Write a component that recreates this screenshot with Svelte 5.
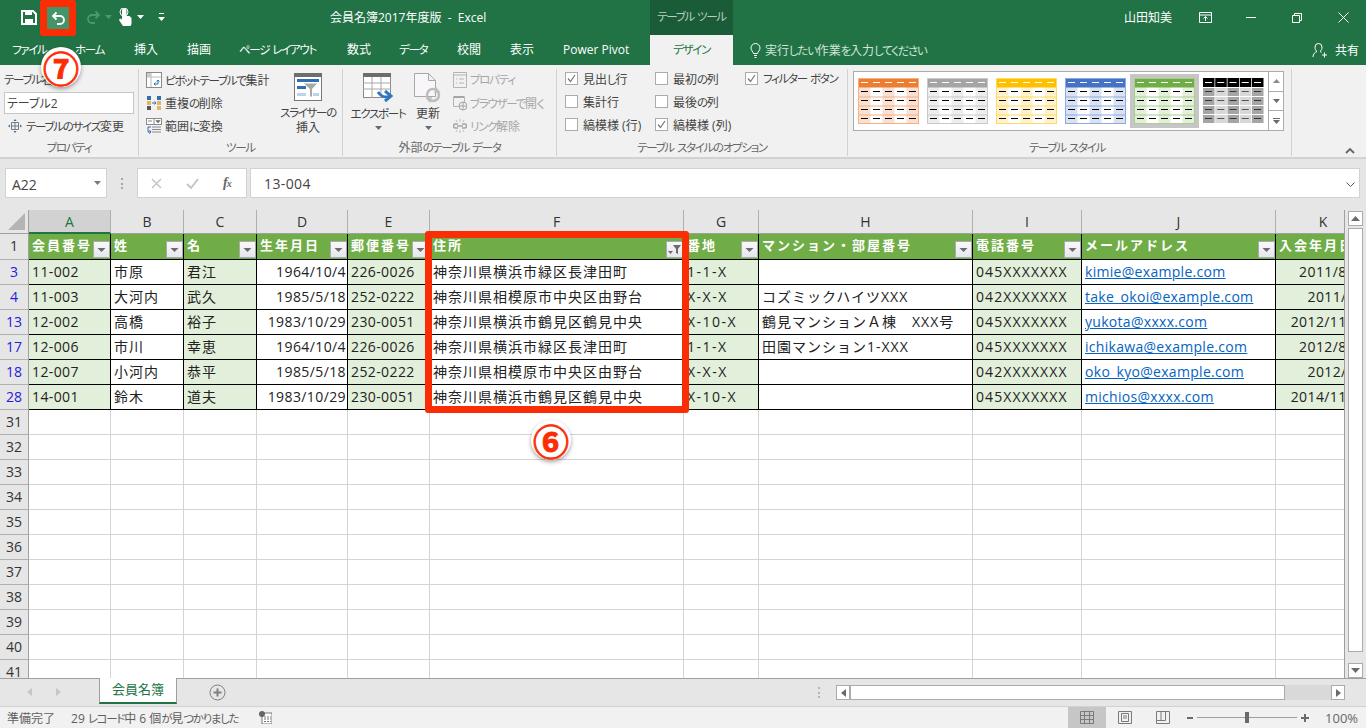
<script>
  const columns = [
    { name: 'A', width: 82, title: '会員番号' },
    { name: 'B', width: 73, title: '姓' },
    { name: 'C', width: 73, title: '名' },
    { name: 'D', width: 91, title: '生年月日' },
    { name: 'E', width: 82, title: '郵便番号' },
    { name: 'F', width: 254, title: '住所', filtered: true },
    { name: 'G', width: 75, title: '番地' },
    { name: 'H', width: 214, title: 'マンション・部屋番号' },
    { name: 'I', width: 109, title: '電話番号' },
    { name: 'J', width: 194, title: 'メールアドレス' },
    { name: 'K', width: 95, title: '入会年月日' }
  ]

  const records = [
    [3, '11-002', '市原', '君江', '1964/10/4', '226-0026', '神奈川県横浜市緑区長津田町', '1-1-X', '', '045XXXXXXX', 'kimie@example.com', '2011/8/10'],
    [4, '11-003', '大河内', '武久', '1985/5/18', '252-0222', '神奈川県相模原市中央区由野台', 'X-X-X', 'コズミックハイツXXX', '042XXXXXXX', 'take_okoi@example.com', '2011/4/1'],
    [13, '12-002', '高橋', '裕子', '1983/10/29', '230-0051', '神奈川県横浜市鶴見区鶴見中央', 'X-10-X', '鶴見マンションＡ棟　XXX号', '045XXXXXXX', 'yukota@xxxx.com', '2012/11/10'],
    [17, '12-006', '市川', '幸恵', '1964/10/4', '226-0026', '神奈川県横浜市緑区長津田町', '1-1-X', '田園マンション1-XXX', '045XXXXXXX', 'ichikawa@example.com', '2012/8/10'],
    [18, '12-007', '小河内', '恭平', '1985/5/18', '252-0222', '神奈川県相模原市中央区由野台', 'X-X-X', '', '042XXXXXXX', 'oko_kyo@example.com', '2012/4/1'],
    [28, '14-001', '鈴木', '道夫', '1983/10/29', '230-0051', '神奈川県横浜市鶴見区鶴見中央', 'X-10-X', '', '045XXXXXXX', 'michios@xxxx.com', '2014/11/10']
  ]

  const emptyRows = [31, 32, 33, 34, 35, 36, 37, 38, 39, 40, 41]

  // label, width of the slot up to the next tab
  const tabs = [
    ['ファイル', 63], ['ホーム', 59], ['挿入', 53], ['描画', 52], ['ページ レイアウト', 108],
    ['数式', 52], ['データ', 58], ['校閲', 53], ['表示', 53], ['Power Pivot', 87]
  ]

  const swatches = [
    { head: '#ed7d31', line: '#f4b183', band: '#fbe0d2' },
    { head: '#a5a5a5', line: '#c9c9c9', band: '#ededed' },
    { head: '#ffc000', line: '#ffd966', band: '#fff2cc' },
    { head: '#4472c4', line: '#8eaadb', band: '#d9e2f3' },
    { head: '#70ad47', line: '#a8d08d', band: '#e2efd9', selected: true }
  ]

  // Meiryo UI has narrow kana; split the runs so they can be tightened
  const runs = (text) => text.match(/[\u3040-\u30ff]+|[^\u3040-\u30ff]+/g) ?? []
  const isKana = (run) => /^[\u3040-\u30ff]/.test(run)
</script>

{#snippet jp(text)}
  {#each runs(text) as run}<span class:kana={isKana(run)}>{run}</span>{/each}
{/snippet}

{#snippet caret()}
  <svg class="caret" width="7" height="4" viewBox="0 0 7 4"><path d="M0 0h7L3.500 4z" fill="#6a6a6a" /></svg>
{/snippet}

{#snippet check(on, label)}
  <div class="check">
    <span class="box">
      {#if on}
        <svg width="13" height="13" viewBox="0 0 13 13"><path d="M3 6.500l2.500 3L10 3" fill="none" stroke="#777" stroke-width="1.200" /></svg>
      {/if}
    </span>
    <span>{@render jp(label)}</span>
  </div>
{/snippet}

{#snippet swatch(s)}
  <div class="swatch" class:selected={s.selected}>
    <svg width="61" height="46" viewBox="0 0 61 46">
      <rect width="61" height="46" fill="#fff" />
      {#each [0, 2, 4] as c}
        <rect x={c * 12 + 0.5} y="9" width="12" height="37" fill={s.band} />
      {/each}
      <rect width="61" height="9.500" fill={s.head} />
      {#each [18.5, 27.5, 36.5] as y}
        <rect {y} width="61" height="1" fill={s.line} />
      {/each}
      <rect x="0.500" y="0.500" width="60" height="45" fill="none" stroke={s.line} />
      {#each [0, 1, 2, 3, 4] as c}
        <rect x={c * 12 + 3} y="4" width="7" height="1" fill="#fff" />
        {#each [13, 22, 31, 40] as y}
          <rect x={c * 12 + 3} {y} width="7" height="1" fill="#000" />
        {/each}
      {/each}
    </svg>
  </div>
{/snippet}

{#snippet filterButton(filtered)}
  <span class="filter">
    {#if filtered}
      <svg width="15" height="15" viewBox="0 0 15 15"><path d="M1 9h5l-2.500 3z" fill="#6b6b6b" /><path d="M6 3h8L11 7v5l-2-1V7z" fill="#6b6b6b" /></svg>
    {:else}
      <svg width="15" height="15" viewBox="0 0 15 15"><path d="M3.500 6h8L7.500 10z" fill="#6b6b6b" /></svg>
    {/if}
  </span>
{/snippet}

<div class="excel">
  <header class="titlebar">
    <div class="qat">
      <svg class="qi" style="left:21px" width="16" height="15" viewBox="0 0 16 15"><path d="M1 1h11l3 3v10H1z" fill="none" stroke="#fff" stroke-width="2" /><rect x="4" y="1" width="7" height="4" fill="#fff" /><rect x="4" y="9" width="8" height="5" fill="#fff" /></svg>
      <span class="undo">
        <svg width="15" height="14" viewBox="0 0 15 14"><path d="M5.500 1.500L2 5l3.500 3.500M2.500 5H9a4 4 0 0 1 0 8H6" fill="none" stroke="#fff" stroke-width="1.800" /></svg>
      </span>
      <svg class="qi" style="left:86px" width="15" height="14" viewBox="0 0 15 14"><path d="M9.500 1.500L13 5 9.500 8.500M12.500 5H6a4 4 0 0 0 0 8h3" fill="none" stroke="#4e9671" stroke-width="1.800" /></svg>
      <svg class="qi" style="left:105px;top:15px" width="7" height="4" viewBox="0 0 7 4"><path d="M0 0h7L3.500 4z" fill="#4e9671" /></svg>
      <svg class="qi" style="left:118px;top:8px" width="14" height="18" viewBox="0 0 14 18"><path d="M4 2a2.500 2.500 0 0 1 4.500 0v6h3l2 2v6l-1 2H5L1 12l1-1.500 2 1z" fill="#fff" /><circle cx="6" cy="4" r="4" fill="none" stroke="#fff" /></svg>
      <svg class="qi" style="left:137px;top:15px" width="7" height="4" viewBox="0 0 7 4"><path d="M0 0h7L3.500 4z" fill="#fff" /></svg>
      <svg class="qi" style="left:158px;top:13px" width="7" height="8" viewBox="0 0 7 8"><path d="M1 0h5v1H1zM0 4h7L3.500 8z" fill="#fff" /></svg>
    </div>
    <div class="doc-title">会員名簿2017年度版&nbsp; - &nbsp;Excel</div>
    <div class="context">{@render jp('テーブル ツール')}</div>
    <div class="user">山田知美</div>
    <div class="window-buttons">
      <svg width="13" height="11" viewBox="0 0 13 11"><path d="M.5.500h12v10H.5zM.5 3h12M6.500 9V4.500M4.500 6.500l2-2 2 2" fill="none" stroke="#fff" /></svg>
      <svg width="10" height="1" viewBox="0 0 10 1"><path d="M0 .5h10" stroke="#fff" /></svg>
      <svg width="10" height="10" viewBox="0 0 10 10"><path d="M.5 2.500h7v7h-7zM2.500 2.500v-2h7v7h-2" fill="none" stroke="#fff" /></svg>
      <svg width="11" height="11" viewBox="0 0 11 11"><path d="M.5.500l10 10M10.500.500l-10 10" fill="none" stroke="#fff" /></svg>
    </div>
  </header>

  <nav class="tabs">
    <div class="tab-list">
      {#each tabs as [label, width]}
        <span class="tab" style="width:{width}px">{@render jp(label)}</span>
      {/each}
    </div>
    <div class="tab active">{@render jp('デザイン')}</div>
    <div class="tell">
      <svg width="11" height="15" viewBox="0 0 11 15"><path d="M3.500 10.500C3 8.500 1 7.500 1 5a4.500 4.500 0 0 1 9 0c0 2.500-2 3.500-2.500 5.500zM4 12.500h3M4.500 14.500h2" fill="none" stroke="#fff" /></svg>
      <span>{@render jp('実行したい作業を入力してください')}</span>
    </div>
    <div class="share">
      <svg width="16" height="16" viewBox="0 0 16 16"><path d="M1 15c0-3 2-5 4-5.500C3.500 8.500 3 7 3 5a3.500 3.500 0 0 1 7 0c0 2-.5 3.500-2 4.500.5.200 1 .4 1.500.8M12.500 10.500v5M10 13h5" fill="none" stroke="#fff" /></svg>
      <span>共有</span>
    </div>
  </nav>

  <section class="ribbon">
    <div class="group g-prop">
      <div class="body">
        <div class="line">{@render jp('テーブル名:')}</div>
        <input class="name-input" value="テーブル2" readonly />
        <div class="small resize">
          <svg width="14" height="14" viewBox="0 0 14 14"><path d="M3.500 3.500h7v7h-7zM3.500 7h7M7 3.500v7" fill="none" stroke="#7a7a7a" /><path d="M7 0L5.500 2h3zM7 14l-1.500-2h3zM0 7l2-1.500v3zM14 7l-2-1.500v3z" fill="#2f6fb0" /></svg>
          <span>{@render jp('テーブルのサイズ変更')}</span>
        </div>
      </div>
      <div class="label">{@render jp('プロパティ')}</div>
    </div>

    <div class="group g-tools">
      <div class="body row">
        <div class="stack">
          <div class="small">
            <svg width="16" height="16" viewBox="0 0 16 16"><rect x=".5" y=".5" width="15" height="15" fill="#fff" stroke="#8a8a8a" /><path d="M1 5h14M5 1v14" stroke="#bbb" /><rect x="1" y="1" width="4" height="4" fill="#ccc" /><path d="M8 12h4V8M10.500 9.500L12 8l1.500 1.500M9.500 10.500L8 12l1.500 1.500" fill="none" stroke="#2f6fb0" /></svg>
            <span>{@render jp('ピボットテーブルで集計')}</span>
          </div>
          <div class="small">
            <svg width="16" height="16" viewBox="0 0 16 16"><rect x="1" y="1" width="4" height="4" fill="#2f6fb0" /><rect x="1" y="6" width="4" height="4" fill="#e3b463" /><rect x="1" y="11" width="4" height="4" fill="#555" /><rect x="11" y="1" width="4" height="4" fill="#2f6fb0" /><rect x="11" y="6" width="4" height="4" fill="#e3b463" /><rect x="11" y="11" width="4" height="4" fill="#e3b463" /><path d="M6 8h4M8.500 6.500L10 8l-1.500 1.500" fill="none" stroke="#2f6fb0" /></svg>
            <span>{@render jp('重複の削除')}</span>
          </div>
          <div class="small">
            <svg width="16" height="16" viewBox="0 0 16 16"><rect x=".5" y=".5" width="15" height="6" fill="#fff" stroke="#8a8a8a" /><path d="M8 .5v6" stroke="#8a8a8a" /><path d="M2 3h4M10 2.500h4L12 5z" stroke="#888" fill="#666" /><path d="M6 9h9M6 11.500h9M6 14h9" stroke="#8a8a8a" /><path d="M5 9H2v5h3M3.500 12L5 14l-2 1.500" fill="none" stroke="#2f6fb0" /></svg>
            <span>{@render jp('範囲に変換')}</span>
          </div>
        </div>
        <div class="big slicer">
          <svg width="28" height="28" viewBox="0 0 28 28"><rect x=".5" y=".5" width="27" height="27" fill="#fff" stroke="#777" /><rect width="28" height="4" fill="#6d6d6d" /><rect x="3" y="6" width="22" height="3" fill="#2f6fb0" /><rect x="3" y="13" width="9" height="3" fill="#2f6fb0" /><rect x="3" y="20" width="9" height="3" fill="#bcd3ea" /><rect x="17" y="20" width="8" height="3" fill="#bcd3ea" /><path d="M9 10h15l-5.500 6v8h-3v-8z" fill="#a8a8a8" stroke="#fff" /></svg>
          <span>{@render jp('スライサーの')}<br />挿入</span>
        </div>
      </div>
      <div class="label">{@render jp('ツール')}</div>
    </div>

    <div class="group g-ext">
      <div class="body row">
        <div class="big export">
          <svg width="30" height="30" viewBox="0 0 30 30"><rect x=".5" y=".5" width="27" height="24" fill="#fff" stroke="#8a8a8a" /><rect width="28" height="4" fill="#6d6d6d" /><path d="M0 10h28M0 16h28M9 4v21M18 4v21" stroke="#a8a8a8" /><path d="M15 19c4 6 8 5 11 5M22 18l6 5-6 5" fill="none" stroke="#2f78c0" stroke-width="3" /></svg>
          <span>{@render jp('エクスポート')}</span>
          {@render caret()}
        </div>
        <div class="big refresh">
          <svg width="28" height="30" viewBox="0 0 28 30"><path d="M.5.500h14l7 7v16H.5zM14.500.500v7h7" fill="#f8f6f8" stroke="#a8a8a8" /><circle cx="19" cy="22" r="6" fill="none" stroke="#bdbdbd" stroke-width="2.500" /><path d="M22 14l4 5-6 1z" fill="#bdbdbd" /><path d="M16 30l-4-5 6-1z" fill="#bdbdbd" /></svg>
          <span>更新</span>
          {@render caret()}
        </div>
        <div class="stack disabled">
          <div class="small">
            <svg width="14" height="16" viewBox="0 0 14 16"><path d="M.5.500h13v15H.5zM.5 3h13M3 7h1M3 11h1M6 7h5M6 11h5" fill="none" stroke="#b5b5b5" /></svg>
            <span>{@render jp('プロパティ')}</span>
          </div>
          <div class="small">
            <svg width="14" height="16" viewBox="0 0 14 16"><path d="M.5 2.500h11v9H.5z" fill="none" stroke="#b5b5b5" /><path d="M.5 1h11v2H.5z" fill="#a5a5a5" /><circle cx="10" cy="11" r="4" fill="#f1f1f1" stroke="#a5a5a5" /><path d="M6 11h8M10 7v8" stroke="#a5a5a5" /></svg>
            <span>{@render jp('ブラウザーで開く')}</span>
          </div>
          <div class="small">
            <svg width="14" height="16" viewBox="0 0 14 16"><path d="M5 6H2.500a2 2 0 0 0 0 4H5M9 6h2.500a2 2 0 0 1 0 4H9M4 8h6" fill="none" stroke="#a5a5a5" stroke-width="1.500" /><path d="M7 1v3M3 2l1 2M11 2l-1 2M7 12v3M3 14l1-2M11 14l-1-2" stroke="#bdbdbd" /></svg>
            <span>{@render jp('リンク解除')}</span>
          </div>
        </div>
      </div>
      <div class="label">{@render jp('外部のテーブル データ')}</div>
    </div>

    <div class="group g-opts">
      <div class="body checks">
        {@render check(true, '見出し行')}
        {@render check(false, '最初の列')}
        {@render check(true, 'フィルター ボタン')}
        {@render check(false, '集計行')}
        {@render check(false, '最後の列')}
        <div></div>
        {@render check(false, '縞模様 (行)')}
        {@render check(true, '縞模様 (列)')}
      </div>
      <div class="label">{@render jp('テーブル スタイルのオプション')}</div>
    </div>

    <div class="group g-styles">
      <div class="body">
        <div class="gallery">
          <div class="swatches">
            {#each swatches as s}
              {@render swatch(s)}
            {/each}
            <div class="swatch">
              <svg width="61" height="46" viewBox="0 0 61 46">
                {#each [0, 1, 2, 3, 4] as c}
                  <rect x={c * 12.25} width="11.500" height="9" fill="#000" />
                  <rect x={c * 12.25 + 2} y="4" width="7" height="1" fill="#fff" />
                  {#each [10, 19, 28, 37] as y}
                    <rect x={c * 12.25} {y} width="11.500" height="8" fill={c % 2 === 0 ? '#a5a5a5' : '#d8d8d8'} />
                    <rect x={c * 12.25 + 2} y={y + 3} width="7" height="1" fill={c % 2 === 0 ? '#333' : '#555'} />
                  {/each}
                {/each}
              </svg>
            </div>
          </div>
          <div class="gallery-arrows">
            <span><svg width="7" height="4" viewBox="0 0 7 4"><path d="M0 4h7L3.500 0z" fill="#8a8a8a" /></svg></span>
            <span><svg width="7" height="4" viewBox="0 0 7 4"><path d="M0 0h7L3.500 4z" fill="#6a6a6a" /></svg></span>
            <span><svg width="7" height="6" viewBox="0 0 7 6"><path d="M0 0h7v1H0zM0 2h7L3.500 6z" fill="#6a6a6a" /></svg></span>
          </div>
        </div>
      </div>
      <div class="label">{@render jp('テーブル スタイル')}</div>
    </div>

    <svg class="collapse" width="10" height="6" viewBox="0 0 10 6"><path d="M1 5l4-4 4 4" fill="none" stroke="#666" stroke-width="1.800" /></svg>
  </section>

  <section class="formula">
    <div class="namebox">
      <span class="name">A22</span>
      <svg width="7" height="4" viewBox="0 0 7 4"><path d="M0 0h7L3.500 4z" fill="#7a7a7a" /></svg>
    </div>
    <span class="grip"></span>
    <div class="fx-buttons">
      <svg width="11" height="11" viewBox="0 0 11 11"><path d="M1 1l9 9M10 1l-9 9" stroke="#c6c6c6" stroke-width="1.500" /></svg>
      <svg width="13" height="11" viewBox="0 0 13 11"><path d="M1 6l4 4 7-9" fill="none" stroke="#c6c6c6" stroke-width="2" /></svg>
      <span class="fx">f<span class="fx-x">x</span></span>
    </div>
    <div class="formula-input">13-004</div>
    <svg class="formula-down" width="9" height="5" viewBox="0 0 9 5"><path d="M.5.500l4 4 4-4" fill="none" stroke="#555" /></svg>
  </section>

  <section class="sheet">
    <div class="grid-wrap">
      <div class="grid" style="grid-template-columns:29px {columns.map((c) => c.width + 'px').join(' ')}">
        <div class="corner"><svg width="17" height="17" viewBox="0 0 17 17"><path d="M17 0v17H0z" fill="#b4b4b4" /></svg></div>
        {#each columns as col, i}
          <div class="col-head" class:current={i === 0}>{col.name}</div>
        {/each}

        <div class="row-head first">1</div>
        {#each columns as col}
          <div class="cell head">
            <span class="head-text">{col.title}</span>
            {@render filterButton(col.filtered)}
          </div>
        {/each}

        {#each records as [no, ...values]}
          <div class="row-head hit">{no}</div>
          {#each values as value, c}
            <div
              class="cell data"
              class:band={c % 2 === 0}
              class:right={c === 3 || c === 10}
              class:num={[0, 3, 4, 10].includes(c)}
              class:street={c === 6}
              class:tel={c === 8}
              class:link={c === 9}
            ><span>{value}</span></div>
          {/each}
        {/each}

        {#each emptyRows as no}
          <div class="row-head">{no}</div>
          {#each columns as col}
            <div class="cell blank"></div>
          {/each}
        {/each}
      </div>
    </div>
    <aside class="vscroll">
      <span class="vbtn"><svg width="9" height="5" viewBox="0 0 9 5"><path d="M0 5h9L4.500 0z" fill="#6a6a6a" /></svg></span>
      <span class="vthumb"></span>
      <span class="vbtn down"><svg width="9" height="5" viewBox="0 0 9 5"><path d="M0 0h9L4.500 5z" fill="#6a6a6a" /></svg></span>
    </aside>
  </section>

  <section class="sheetbar">
    <div class="nav-arrows">
      <svg width="5" height="8" viewBox="0 0 5 8"><path d="M5 0v8L0 4z" fill="#c6c6c6" /></svg>
      <svg width="5" height="8" viewBox="0 0 5 8"><path d="M0 0v8l5-4z" fill="#c6c6c6" /></svg>
    </div>
    <div class="sheet-tab">会員名簿</div>
    <svg class="add-sheet" width="17" height="17" viewBox="0 0 17 17"><circle cx="8.500" cy="8.500" r="7.500" fill="none" stroke="#7f7f7f" /><path d="M8.500 4.500v8M4.500 8.500h8" stroke="#7f7f7f" stroke-width="2" /></svg>
    <span class="bar-grip"></span>
    <div class="hscroll">
      <span class="hbtn"><svg width="5" height="8" viewBox="0 0 5 8"><path d="M5 0v8L0 4z" fill="#6a6a6a" /></svg></span>
      <span class="hthumb"></span>
      <span class="hbtn"><svg width="5" height="8" viewBox="0 0 5 8"><path d="M0 0v8l5-4z" fill="#6a6a6a" /></svg></span>
    </div>
  </section>

  <footer class="status">
    <span class="ready">準備完了</span>
    <span class="found">29 {@render jp('レコード')}中 6 個{@render jp('が')}見{@render jp('つかりました')}</span>
    <svg class="macro" width="13" height="13" viewBox="0 0 13 13"><rect x="3" y="2" width="10" height="11" fill="#fff" stroke="#777" /><circle cx="3" cy="3" r="3" fill="#666" /><path d="M5 6h7M5 8h7M5 10.500h7" stroke="#777" stroke-dasharray="2 1" /></svg>
    <div class="views">
      <span class="view on"><svg width="14" height="13" viewBox="0 0 14 13"><path d="M.5.500h13v12H.5zM.5 4.500h13M.5 8.500h13M4.500.500v12M9.500.500v12" fill="none" stroke="#7a7a7a" /></svg></span>
      <span class="view"><svg width="14" height="13" viewBox="0 0 14 13"><path d="M.5.500h13v12H.5z" fill="none" stroke="#7a7a7a" /><path d="M3.500 2.500h7v8h-7zM5 5h4M5 7h4" fill="none" stroke="#7a7a7a" /></svg></span>
      <span class="view"><svg width="14" height="13" viewBox="0 0 14 13"><path d="M.5.500h13v12H.5zM.5 9.500h9v-9M5 .5v9" fill="none" stroke="#7a7a7a" /></svg></span>
    </div>
    <div class="zoom">
      <svg width="6" height="2" viewBox="0 0 6 2"><rect width="6" height="2" fill="#6a6a6a" /></svg>
      <div class="slider"><span class="knob"></span></div>
      <svg width="8" height="8" viewBox="0 0 8 8"><path d="M0 3h8v2H0zM3 0h2v8H3z" fill="#6a6a6a" /></svg>
      <span class="percent">100%</span>
    </div>
  </footer>

  <div class="red-box undo-mark"></div>
  <div class="red-box column-mark"></div>
  <div class="badge b7">⑦</div>
  <div class="badge b6">⑥</div>
</div>

<style>
  :global(body) {
    margin: 0;
    overflow: hidden;
  }

  .excel {
    position: relative;
    display: flex;
    flex-direction: column;
    width: 1366px;
    height: 728px;
    overflow: hidden;
    background: #e6e6e6;
    color: #444;
    font-family: "Open Sans", "Noto Sans CJK JP", sans-serif;
    font-size: 12px;
    font-feature-settings: "palt";
  }

  .kana {
    font-size: 11.500px;
    letter-spacing: -1.300px;
  }

  svg {
    flex: none;
  }

  /* title bar */
  .titlebar {
    position: relative;
    flex: 0 0 35px;
    display: flex;
    align-items: center;
    background: #217346;
    color: #fff;
  }

  .qat {
    position: absolute;
    inset: 0 auto 0 0;
    width: 180px;
  }

  .qi {
    position: absolute;
    top: 10px;
  }

  .undo {
    position: absolute;
    left: 46px;
    top: 6px;
    width: 24px;
    height: 24px;
    display: grid;
    place-items: center;
    background: #439467;
  }

  .doc-title {
    margin-left: 330px;
    width: 320px;
    white-space: nowrap;
    padding-bottom: 2px;
  }

  .context {
    width: 83px;
    height: 35px;
    line-height: 33px;
    text-align: center;
    background: #1a5c38;
    color: #b9cdc1;
    white-space: nowrap;
  }

  .user {
    margin-left: auto;
    margin-right: 10px;
    padding-bottom: 2px;
  }

  .window-buttons {
    display: grid;
    grid-template-columns: repeat(4, 46px);
    justify-items: center;
    align-items: center;
    width: 184px;
  }

  /* ribbon tabs */
  .tabs {
    flex: 0 0 30px;
    display: flex;
    align-items: stretch;
    background: #217346;
    color: #fff;
  }

  .tab-list {
    width: 650px;
    padding-left: 12px;
    box-sizing: border-box;
    display: flex;
    align-items: center;
    white-space: nowrap;
  }

  .tab {
    flex: none;
    line-height: 30px;
  }

  .tab.active {
    width: 83px;
    text-align: center;
    background: #f1f1f1;
    color: #217346;
  }

  .tell {
    margin-left: 17px;
    display: flex;
    align-items: center;
    gap: 4px;
    color: #d3e3da;
  }

  .share {
    margin-left: auto;
    margin-right: 7px;
    display: flex;
    align-items: center;
    gap: 7px;
  }

  /* ribbon body */
  .ribbon {
    position: relative;
    flex: 0 0 92px;
    display: flex;
    background: #f1f1f1;
    border-bottom: 2px solid #d2d2d2;
    box-sizing: content-box;
    height: 92px;
  }

  .group {
    position: relative;
    display: flex;
    flex-direction: column;
    height: 87px;
    margin-top: 4px;
    border-right: 1px solid #d2d2d2;
    box-sizing: border-box;
  }

  .body {
    flex: 1;
    min-height: 0;
  }

  .row {
    display: flex;
  }

  .label {
    flex: 0 0 16px;
    text-align: center;
    line-height: 16px;
    color: #666;
    white-space: nowrap;
  }

  .g-prop { width: 139px; padding-left: 4px; }
  .g-tools { width: 204px; padding-left: 7px; }
  .g-ext { width: 214px; }
  .g-opts { width: 291px; }
  .g-styles { width: 444px; padding-left: 5px; }

  .g-prop .label {
    margin-left: -4px;
  }

  .g-tools .label {
    margin-left: -7px;
  }

  .g-styles .label {
    margin-left: -5px;
    margin-right: 5px;
  }

  .line {
    height: 23px;
    line-height: 22px;
    color: #444;
  }

  .name-input {
    display: block;
    box-sizing: border-box;
    width: 130px;
    height: 22px;
    padding: 0 2px;
    border: 1px solid #c6c6c6;
    background: #fff;
    font: inherit;
    color: #444;
    outline: none;
  }

  .small {
    height: 23px;
    display: flex;
    align-items: center;
    gap: 3px;
    white-space: nowrap;
    padding-bottom: 2px;
    box-sizing: border-box;
  }

  .resize {
    margin-top: 1px;
    padding-left: 4px;
    gap: 4px;
  }

  .stack {
    display: flex;
    flex-direction: column;
  }

  .g-tools .stack {
    width: 131px;
  }

  .big {
    display: flex;
    flex-direction: column;
    align-items: center;
    text-align: center;
    line-height: 15px;
    white-space: nowrap;
  }

  .big svg:first-child {
    margin-top: 4px;
    margin-bottom: 3px;
  }

  .slicer svg:first-child {
    margin-bottom: 4px;
  }

  .slicer {
    width: 62px;
  }

  .export {
    width: 70px;
  }

  .refresh {
    width: 40px;
    margin-left: -5px;
    margin-right: 5px;
  }

  .caret {
    margin-top: 5px;
  }

  .disabled {
    color: #a6a6a6;
  }

  .checks {
    display: grid;
    grid-template-columns: 90px 90px 1fr;
    grid-auto-rows: 23px;
    padding-left: 8px;
    margin-top: -2px;
  }

  .check {
    display: flex;
    align-items: center;
    gap: 5px;
    white-space: nowrap;
  }

  .box {
    width: 13px;
    height: 13px;
    box-sizing: border-box;
    border: 1px solid #ababab;
    background: #fff;
    display: block;
    position: relative;
  }

  .box svg {
    position: absolute;
    left: -1px;
    top: -1px;
  }

  .gallery {
    width: 431px;
    height: 60px;
    margin-top: 2px;
    display: flex;
    box-sizing: border-box;
    border: 1px solid #ababab;
    background: #fff;
  }

  .swatches {
    flex: 1;
    display: flex;
    align-items: center;
    padding-left: 4px;
    gap: 8px;
    border-right: 1px solid #ababab;
  }

  .swatch {
    display: flex;
  }

  .swatch svg {
    display: block;
  }

  .swatch.selected {
    outline: 4px solid #c6c6c6;
    background: #c6c6c6;
  }

  .gallery-arrows {
    width: 14px;
    display: flex;
    flex-direction: column;
  }

  .gallery-arrows span {
    flex: 1;
    display: grid;
    place-items: center;
    border-bottom: 1px solid #ababab;
  }

  .gallery-arrows span:last-child {
    border-bottom: 0;
  }

  .collapse {
    position: absolute;
    right: 11px;
    bottom: 3px;
  }

  /* formula bar */
  .formula {
    position: relative;
    flex: 0 0 51px;
    display: flex;
    align-items: flex-start;
    padding: 9px 6px 0 5px;
    box-sizing: border-box;
    background: #e6e6e6;
    font-size: 14px;
  }

  .namebox,
  .fx-buttons,
  .formula-input {
    height: 30px;
    box-sizing: border-box;
    border: 1px solid #d2d2d2;
    background: #fff;
    display: flex;
    align-items: center;
  }

  .namebox {
    width: 102px;
    justify-content: space-between;
    padding: 0 5px 0 6px;
    color: #444;
  }

  .name {
    padding-top: 3px;
  }

  .grip {
    width: 2px;
    height: 11px;
    margin: 10px 14px 0 14px;
    border-left: 2px dotted #a6a6a6;
    box-sizing: border-box;
  }

  .fx-buttons {
    width: 110px;
    padding-left: 13px;
    gap: 24px;
  }

  .fx {
    font-family: "Liberation Serif", serif;
    font-style: italic;
    font-weight: bold;
    color: #666;
    font-size: 14px;
    line-height: 1;
    letter-spacing: -1px;
  }

  .fx-x {
    font-size: 10px;
  }

  .formula-input {
    flex: 1;
    margin-left: 3px;
    padding-left: 13px;
    color: #444;
    letter-spacing: .4px;
  }

  .formula-down {
    position: absolute;
    right: 11px;
    top: 23px;
  }

  /* sheet */
  .sheet {
    flex: 0 0 468px;
    display: flex;
    background: #fff;
  }

  .grid-wrap {
    width: 1345px;
    height: 468px;
    overflow: hidden;
    border-right: 1px solid #9f9f9f;
    box-sizing: border-box;
  }

  .grid {
    display: grid;
    grid-template-rows: 24px 26px repeat(17, 25px);
    width: max-content;
    font-size: 14px;
    font-feature-settings: normal;
    color: #222;
  }

  .grid > div {
    box-sizing: border-box;
    overflow: hidden;
    white-space: nowrap;
  }

  .corner {
    background: #e6e6e6;
    border-right: 1px solid #9f9f9f;
    border-bottom: 1px solid #9f9f9f;
    display: flex;
    align-items: flex-end;
    justify-content: flex-end;
    padding: 0 3px 3px 0;
  }

  .col-head {
    background: #e6e6e6;
    border-right: 1px solid #b0b0b0;
    border-bottom: 1px solid #9f9f9f;
    text-align: center;
    line-height: 23px;
    color: #333;
  }

  .col-head.current {
    background: #d2d2d2;
    color: #217346;
    border-bottom: 2px solid #217346;
  }

  .row-head {
    background: #e6e6e6;
    border-right: 1px solid #9f9f9f;
    border-bottom: 1px solid #b0b0b0;
    text-align: center;
    line-height: 24px;
    color: #333;
  }

  .row-head.hit {
    color: #2121e0;
  }

  .cell {
    border-right: 1px solid #d4d4d4;
    border-bottom: 1px solid #d4d4d4;
  }

  .head {
    position: relative;
    display: flex;
    align-items: center;
    padding-left: 3px;
    background: #70ad47;
    border-right: 1px solid #000;
    border-bottom: 1px solid #000;
    color: #fff;
    font-weight: bold;
    font-size: 13px;
    letter-spacing: 2px;
    font-family: "Noto Sans CJK JP", sans-serif;
    line-height: 23px;
  }

  .head-text {
    padding-bottom: 5px;
  }

  .filter {
    position: absolute;
    right: 0;
    top: 7px;
    width: 17px;
    height: 17px;
    box-sizing: border-box;
    border: 1px solid #ababab;
    background: linear-gradient(#f8f8fc, #e6e6ee);
    display: block;
  }

  .filter svg {
    display: block;
  }

  .data {
    padding-left: 3px;
    border-right: 1px solid #000;
    border-bottom: 1px solid #000;
    line-height: 24px;
    letter-spacing: 1px;
  }

  .num {
    letter-spacing: .4px;
  }

  .street {
    letter-spacing: 1.500px;
  }

  .tel {
    letter-spacing: 1.100px;
  }

  .band {
    background: #e2efda;
  }

  .right {
    text-align: right;
    padding-right: 1px;
  }

  .link {
    letter-spacing: .3px;
  }

  .link span {
    color: #0563c1;
    text-decoration: underline;
  }

  .vscroll {
    flex: 1;
    position: relative;
    background: #e6e6e6;
    display: flex;
    flex-direction: column;
    padding: 1px 3px 0 3px;
    box-sizing: border-box;
  }

  .vbtn {
    height: 15px;
    flex: none;
    box-sizing: border-box;
    border: 1px solid #ababab;
    background: #fff;
    display: grid;
    place-items: center;
  }

  .vthumb {
    flex: 0 0 424px;
    margin-top: 2px;
    box-sizing: border-box;
    border: 1px solid #ababab;
    background: #fff;
  }

  .vbtn.down {
    margin-top: 11px;
  }

  /* sheet tabs and horizontal scrollbar */
  .sheetbar {
    flex: 0 0 28px;
    position: relative;
    display: flex;
    align-items: flex-start;
    box-sizing: border-box;
    border-top: 1px solid #9f9f9f;
    background: #e6e6e6;
  }

  .nav-arrows {
    width: 100px;
    display: flex;
    gap: 24px;
    padding: 9px 0 0 27px;
    box-sizing: border-box;
  }

  .sheet-tab {
    width: 76px;
    height: 24px;
    margin-top: -1px;
    box-sizing: content-box;
    text-align: center;
    line-height: 23px;
    background: #fff;
    color: #217346;
    border-bottom: 2px solid #217346;
    border-left: 1px solid #9f9f9f;
    border-right: 1px solid #9f9f9f;
    margin-left: -1px;
    font-size: 13px;
    font-feature-settings: normal;
  }

  .add-sheet {
    margin: 5px 0 0 32px;
  }

  .bar-grip {
    width: 2px;
    height: 11px;
    margin: 8px 0 0 592px;
    border-left: 2px dotted #b5b5b5;
    box-sizing: border-box;
  }

  .hscroll {
    width: 509px;
    height: 15px;
    margin: 6px 0 0 16px;
    display: flex;
    background: #d9d9d9;
  }

  .hbtn {
    width: 14px;
    height: 15px;
    flex: none;
    box-sizing: border-box;
    border: 1px solid #ababab;
    background: #fff;
    display: grid;
    place-items: center;
  }

  .hthumb {
    width: 435px;
    box-sizing: border-box;
    border: 1px solid #ababab;
    background: #fff;
    margin-right: 46px;
  }

  /* status bar */
  .status {
    flex: 1;
    display: flex;
    align-items: center;
    background: #f1f1f1;
    color: #5f5f5f;
    border-top: 1px solid #d2d2d2;
    box-sizing: border-box;
  }

  .ready {
    margin-left: 7px;
  }

  .found {
    margin-left: 16px;
    width: 188px;
    white-space: nowrap;
  }

  .views {
    margin-left: 796px;
    display: flex;
    align-self: stretch;
  }

  .view {
    width: 38px;
    display: grid;
    place-items: center;
  }

  .view.on {
    background: #c6c6c6;
  }

  .zoom {
    display: flex;
    align-items: center;
    margin-left: 5px;
  }

  .slider {
    position: relative;
    width: 100px;
    height: 1px;
    margin: 0 4px;
    background: #9f9f9f;
  }

  .knob {
    position: absolute;
    left: 48px;
    top: -5px;
    width: 4px;
    height: 11px;
    background: #6a6a6a;
  }

  .percent {
    margin-left: 16px;
    font-size: 13px;
    color: #666;
  }

  /* callouts drawn over the window */
  .red-box {
    position: absolute;
    box-sizing: border-box;
    border: 7px solid #fb2d05;
    border-radius: 3px;
  }

  .undo-mark {
    left: 40px;
    top: 0;
    width: 36px;
    height: 36px;
  }

  .column-mark {
    left: 425px;
    top: 231px;
    width: 264px;
    height: 182px;
  }

  .badge {
    position: absolute;
    width: 40px;
    height: 40px;
    border-radius: 50%;
    background: #fff;
    box-shadow: 0 2px 4px rgba(0, 0, 0, .35);
    display: grid;
    place-items: center;
    color: #fb2d05;
    font-family: "Noto Sans CJK JP", sans-serif;
    font-weight: bold;
    font-size: 36px;
    line-height: 40px;
    -webkit-text-stroke: .9px #fb2d05;
  }

  .b7 {
    left: 41px;
    top: 47px;
  }

  .b6 {
    left: 531px;
    top: 420px;
  }
</style>
